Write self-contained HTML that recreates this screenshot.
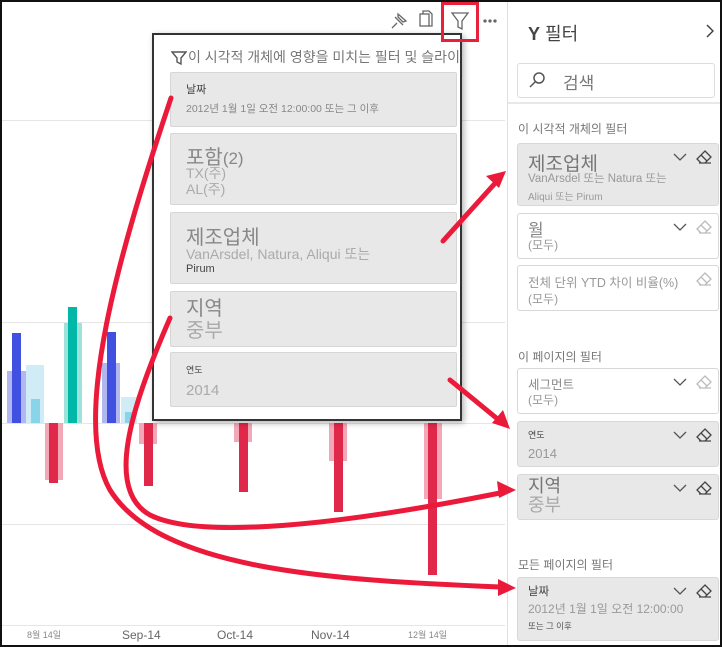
<!DOCTYPE html>
<html><head><meta charset="utf-8"><style>
*{margin:0;padding:0;box-sizing:border-box}
body{width:722px;height:647px;overflow:hidden;background:#fff;font-family:"Liberation Sans","Noto Sans CJK KR",sans-serif;position:relative}
.abs{position:absolute}
.frame{position:absolute;left:0;top:0;width:722px;height:647px;border:2px solid #111;z-index:50;pointer-events:none}
.grid{position:absolute;left:0;width:505px;height:1px;background:#e6e6e6}
.bar{position:absolute}
.pop{position:absolute;left:152px;top:33px;width:310px;height:388px;background:#fff;border:2px solid #333;box-shadow:2px 2px 6px rgba(0,0,0,.3);z-index:5}
.pc{position:absolute;left:16px;width:287px;background:#e8e8e8;border:1px solid #d6d6d6;border-radius:2px;color:#888}
.pane{position:absolute;left:507px;top:0;width:215px;height:647px;background:#fff;border-left:1px solid #e0e0e0}
.rc{position:absolute;left:9px;width:202px;border:1px solid #d8d8d8;border-radius:3px;background:#fff;color:#777}
.rc.g{background:#e8e8e8}
.lbl{position:absolute;left:10px;font-size:12px;color:#777}
.ch{position:absolute;left:155px;top:9px}
.er{position:absolute;left:178px;top:6px}
.ax{position:absolute;top:628px;font-size:11px;color:#888}
</style></head><body>
<div class="grid" style="top:120px"></div>
<div class="grid" style="top:322px"></div>
<div class="grid" style="top:423px"></div>
<div class="grid" style="top:524px"></div>
<div class="grid" style="top:625px"></div>
<div class="bar" style="left:7px;top:371px;width:19px;height:52px;background:#b3b7f0"></div>
<div class="bar" style="left:12px;top:333px;width:9px;height:90px;background:#4050e0"></div>
<div class="bar" style="left:26px;top:365px;width:18px;height:58px;background:#d0ecf6"></div>
<div class="bar" style="left:31px;top:399px;width:9px;height:24px;background:#8ad4ea"></div>
<div class="bar" style="left:64px;top:323px;width:18px;height:100px;background:#9ee2da"></div>
<div class="bar" style="left:68px;top:307px;width:9px;height:116px;background:#00b8a8"></div>
<div class="bar" style="left:45px;top:423px;width:18px;height:57px;background:#f2a8b6"></div>
<div class="bar" style="left:49px;top:423px;width:9px;height:60px;background:#e0284a"></div>
<div class="bar" style="left:102px;top:363px;width:18px;height:60px;background:#b3b7f0"></div>
<div class="bar" style="left:107px;top:332px;width:9px;height:91px;background:#4050e0"></div>
<div class="bar" style="left:121px;top:397px;width:16px;height:26px;background:#d0ecf6"></div>
<div class="bar" style="left:125px;top:412px;width:9px;height:11px;background:#8ad4ea"></div>
<div class="bar" style="left:139px;top:423px;width:18px;height:21px;background:#f2a8b6"></div>
<div class="bar" style="left:144px;top:423px;width:9px;height:63px;background:#e0284a"></div>
<div class="bar" style="left:234px;top:423px;width:18px;height:19px;background:#f2a8b6"></div>
<div class="bar" style="left:239px;top:423px;width:9px;height:69px;background:#e0284a"></div>
<div class="bar" style="left:329px;top:423px;width:18px;height:38px;background:#f2a8b6"></div>
<div class="bar" style="left:334px;top:423px;width:9px;height:89px;background:#e0284a"></div>
<div class="bar" style="left:424px;top:423px;width:18px;height:76px;background:#f2a8b6"></div>
<div class="bar" style="left:428px;top:423px;width:9px;height:152px;background:#e0284a"></div>
<div class="ax" style="left:27px;font-size:9px">8월 14일</div>
<div class="ax" style="left:122px;color:#666;font-size:12px">Sep-14</div>
<div class="ax" style="left:217px;color:#666;font-size:12px">Oct-14</div>
<div class="ax" style="left:311px;color:#666;font-size:12px">Nov-14</div>
<div class="ax" style="left:408px;font-size:9px">12월 14일</div>
<svg class="abs" style="left:388px;top:8px" width="112" height="26" viewBox="0 0 112 26" fill="none" stroke="#666" stroke-width="1.3">
<path d="M4 20l5-5M7 9l8 8M10 6l8 7-3 1-5-5z"/>
<rect x="32" y="6" width="9" height="12"/><path d="M35 6V3h6l3 3v12h-3"/>
<path d="M64 5h16l-6 8v8l-4-2v-6z"/>
<circle cx="97" cy="13" r="1" fill="#666"/><circle cx="102" cy="13" r="1" fill="#666"/><circle cx="107" cy="13" r="1" fill="#666"/>
</svg>
<div class="abs" style="left:441px;top:2px;width:38px;height:40px;border:3px solid #e8203c;z-index:6"></div>
<div class="pop">
<svg class="abs" style="left:17px;top:15px" width="16" height="16" viewBox="0 0 16 16" fill="none" stroke="#555" stroke-width="1.4"><path d="M1 2h14l-5 6v6l-4-2V8z"/></svg>
<div class="abs" style="left:34px;top:12px;font-size:14px;color:#777;white-space:nowrap;width:272px;overflow:hidden">이 시각적 개체에 영향을 미치는 필터 및 슬라이서</div>
<div class="pc" style="top:37px;height:55px"><div style="position:absolute;left:15px;top:8px;font-size:11px;color:#444">날짜</div><div style="position:absolute;left:15px;top:28px;font-size:10.5px;color:#888">2012년 1월 1일 오전 12:00:00 또는 그 이후</div></div>
<div class="pc" style="top:98px;height:72px"><div style="position:absolute;left:15px;top:7px;font-size:20px;color:#888">포함<span style="font-size:17px">(2)</span></div><div style="position:absolute;left:15px;top:31px;font-size:14px;line-height:16px;color:#aaa">TX(주)<br>AL(주)</div></div>
<div class="pc" style="top:177px;height:72px"><div style="position:absolute;left:15px;top:8px;font-size:20px;color:#888">제조업체</div><div style="position:absolute;left:15px;top:31px;font-size:14px;color:#aaa">VanArsdel, Natura, Aliqui 또는</div><div style="position:absolute;left:15px;top:50px;font-size:11px;color:#444">Pirum</div></div>
<div class="pc" style="top:256px;height:56px"><div style="position:absolute;left:15px;top:6px;font-size:20px;line-height:22px;color:#888">지역<br><span style="color:#aaa">중부</span></div></div>
<div class="pc" style="top:317px;height:55px"><div style="position:absolute;left:15px;top:10px;font-size:9px;color:#444">연도</div><div style="position:absolute;left:15px;top:29px;font-size:15px;color:#aaa">2014</div></div>
</div>
<svg width="0" height="0" style="position:absolute"><defs>
<symbol id="chv" viewBox="0 0 14 8"><path d="M1 1l6 6 6-6" fill="none" stroke="#555" stroke-width="1.3"/></symbol>
<symbol id="ers" viewBox="0 0 16 14"><path d="M9 1l6 6-6 6H5L1 9z M5 5l6 6 M3 13h12" fill="none" stroke="currentColor" stroke-width="1.3"/></symbol>
</defs></svg>
<div class="pane">
<div class="abs" style="left:20px;top:20px;font-size:18px;color:#444"><b>Y</b> 필터</div>
<svg class="abs" style="left:198px;top:24px" width="8" height="14" viewBox="0 0 8 14"><path d="M1 1l6 6-6 6" fill="none" stroke="#444" stroke-width="1.5"/></svg>
<div class="abs" style="left:9px;top:63px;width:198px;height:35px;border:1px solid #ddd;border-radius:3px"></div>
<svg class="abs" style="left:20px;top:71px" width="18" height="18" viewBox="0 0 18 18" fill="none" stroke="#555" stroke-width="1.5"><circle cx="11" cy="7" r="5"/><path d="M7 11l-5 5"/></svg>
<div class="abs" style="left:55px;top:69px;font-size:17px;color:#777">검색</div>
<div class="abs" style="left:0;top:102px;width:215px;height:2px;background:#e8e8e8"></div>
<div class="lbl" style="top:120px">이 시각적 개체의 필터</div>
<div class="rc g" style="top:143px;height:63px"><div class="abs" style="left:10px;top:5px;font-size:19px;color:#777">제조업체</div><div class="abs" style="left:10px;top:26px;font-size:11.5px;line-height:18px;color:#999">VanArsdel 또는 Natura 또는<br><span style="font-size:10px">Aliqui 또는 Pirum</span></div><svg class="ch" width="14" height="8"><use href="#chv"/></svg><svg class="er" width="16" height="14" style="color:#444"><use href="#ers"/></svg></div>
<div class="rc" style="top:213px;height:46px"><div class="abs" style="left:10px;top:2px;font-size:17px;color:#888">월</div><div class="abs" style="left:10px;top:22px;font-size:12px;color:#999">(모두)</div><svg class="ch" width="14" height="8"><use href="#chv"/></svg><svg class="er" width="16" height="14" style="color:#bbb"><use href="#ers"/></svg></div>
<div class="rc" style="top:265px;height:46px"><div class="abs" style="left:10px;top:6px;font-size:12.5px;color:#999">전체 단위 YTD 차이 비율(%)</div><div class="abs" style="left:10px;top:24px;font-size:12px;color:#999">(모두)</div><svg class="er" width="16" height="14" style="color:#bbb"><use href="#ers"/></svg></div>
<div class="lbl" style="top:348px">이 페이지의 필터</div>
<div class="rc" style="top:368px;height:46px"><div class="abs" style="left:10px;top:5px;font-size:12.5px;color:#888">세그먼트</div><div class="abs" style="left:10px;top:22px;font-size:12px;color:#999">(모두)</div><svg class="ch" width="14" height="8"><use href="#chv"/></svg><svg class="er" width="16" height="14" style="color:#bbb"><use href="#ers"/></svg></div>
<div class="rc g" style="top:421px;height:46px"><div class="abs" style="left:10px;top:6px;font-size:9px;color:#444">연도</div><div class="abs" style="left:10px;top:24px;font-size:13px;color:#999">2014</div><svg class="ch" width="14" height="8"><use href="#chv"/></svg><svg class="er" width="16" height="14" style="color:#444"><use href="#ers"/></svg></div>
<div class="rc g" style="top:474px;height:46px"><div class="abs" style="left:10px;top:2px;font-size:18px;line-height:19px;color:#777">지역<br><span style="color:#aaa">중부</span></div><svg class="ch" width="14" height="8"><use href="#chv"/></svg><svg class="er" width="16" height="14" style="color:#444"><use href="#ers"/></svg></div>
<div class="lbl" style="top:556px">모든 페이지의 필터</div>
<div class="rc g" style="top:577px;height:64px"><div class="abs" style="left:10px;top:5px;font-size:11.5px;color:#444">날짜</div><div class="abs" style="left:10px;top:22px;font-size:12px;color:#999">2012년 1월 1일 오전 12:00:00</div><div class="abs" style="left:10px;top:42px;font-size:8.5px;color:#555">또는 그 이후</div><svg class="ch" width="14" height="8"><use href="#chv"/></svg><svg class="er" width="16" height="14" style="color:#444"><use href="#ers"/></svg></div>
</div>
<svg class="abs" style="left:0;top:0;z-index:20" width="722" height="647" viewBox="0 0 722 647" fill="none" stroke="#ec1a3a" stroke-width="5" stroke-linecap="round">
<path d="M443 241L498 180"/><path d="M506 171l-20 5 13 12z" fill="#ec1a3a" stroke="none"/>
<path d="M450 380L500 421"/><path d="M510 429l-7-19-11 13z" fill="#ec1a3a" stroke="none"/>
<path d="M170 318C130 410 105 490 150 515C200 540 340 525 500 493"/><path d="M516 490l-19-9 2 17z" fill="#ec1a3a" stroke="none"/>
<path d="M171 98C120 250 70 420 110 490C160 570 330 580 500 587"/><path d="M516 588l-18-9 0 17z" fill="#ec1a3a" stroke="none"/>
</svg>
<div class="frame"></div>
</body></html>
